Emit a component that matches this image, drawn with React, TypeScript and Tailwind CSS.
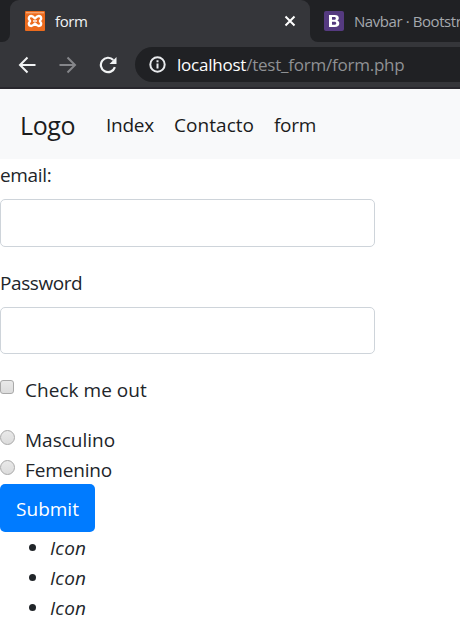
import React from 'react';

function XamppIcon() {
  return (
    <svg className="size-5 shrink-0" viewBox="0 0 20 20">
      <rect width="20" height="20" rx="1" fill="#ec6b1d" />
      <rect x="1" y="1" width="18" height="1.4" fill="#f5a470" />
      <path d="M6.300 5C4.500 5 3.800 6.100 3.800 7.400c0 1.300 1.300 1.800 1.300 2.600s-1.300 1.300-1.300 2.600c0 1.300.7 2.400 2.500 2.400 1.500 0 2.200-.8 3.700-2.500 1.500 1.700 2.200 2.500 3.700 2.500 1.800 0 2.500-1.100 2.500-2.400 0-1.300-1.300-1.800-1.300-2.600s1.300-1.300 1.300-2.600c0-1.300-.7-2.400-2.500-2.400-1.500 0-2.200.8-3.700 2.500C8.500 5.800 7.800 5 6.300 5Z" fill="none" stroke="#fff" strokeWidth="2.300" strokeLinejoin="round" />
      <path d="M8 10h4" stroke="#fff" strokeWidth="1.400" />
    </svg>
  );
}

function BootstrapIcon() {
  return (
    <svg className="size-5 shrink-0" viewBox="0 0 20 20">
      <rect width="20" height="20" rx="2" fill="#553a80" />
      <path fillRule="evenodd" fill="#fff" d="M5 4h5.800c2.600 0 4 1.100 4 3 0 1.300-.7 2.200-1.800 2.600 1.400.3 2.300 1.300 2.300 2.900 0 2.300-1.700 3.500-4.500 3.500H5ZM8 6.100v2.600h2.100c1.200 0 1.700-.5 1.700-1.300s-.6-1.300-1.700-1.300Zm0 4.700v3h2.400c1.300 0 1.900-.6 1.900-1.500s-.7-1.500-1.900-1.500Z" />
    </svg>
  );
}

function Browser() {
  return (
    <header className="h-[89px] overflow-hidden bg-[#35363a]">
      <div className="flex h-[42px] bg-[#35363a]">
        <div className="w-[10px] shrink-0 rounded-br-[8px] bg-[#202124]" />
        <div className="w-[300px] shrink-0 bg-[#202124]">
          <div className="flex h-[42px] items-center rounded-t-[9px] bg-[#35363a] pl-[15px] pr-[14px]">
            <XamppIcon />
            <span className="ml-[10px] text-[15px] leading-5 tracking-[-0.4px] text-[#f1f3f4]">form</span>
            <svg className="ml-auto size-3" viewBox="0 0 12 12">
              <path d="M1.500 1.500l9 9m0-9l-9 9" stroke="#fff" strokeWidth="2" />
            </svg>
          </div>
        </div>
        <div className="flex w-[150px] shrink-0 items-center rounded-bl-[8px] bg-[#202124] pl-[14px]">
          <BootstrapIcon />
          <span className="ml-[10px] whitespace-nowrap text-[15px] leading-5 tracking-[-0.42px] text-[#a5a9ae]">Navbar · Bootstr</span>
        </div>
      </div>
      <div className="flex h-[45px] items-center">
        <svg className="ml-[18px] size-[18px] shrink-0" viewBox="0 0 18 18" fill="none" stroke="#f1f3f4" strokeWidth="2">
          <path d="M17.500 9H2.500M9.500 1.500L2 9l7.500 7.500" />
        </svg>
        <svg className="ml-[23px] size-[18px] shrink-0" viewBox="0 0 18 18" fill="none" stroke="#85868a" strokeWidth="2">
          <path d="M.5 9h15M8.500 1.500L16 9l-7.500 7.500" />
        </svg>
        <svg className="ml-[22px] size-[18px] shrink-0" viewBox="0 0 18 18">
          <path d="M14.300 4A7.200 7.200 0 1 0 15.900 11.200" fill="none" stroke="#f1f3f4" strokeWidth="2.200" />
          <path d="M17.500 1v7h-7Z" fill="#f1f3f4" />
        </svg>
        <div className="ml-[18px] flex h-[35px] grow items-center rounded-l-full bg-[#202124] pl-[14px]">
          <svg className="size-[17px] shrink-0" viewBox="0 0 17 17">
            <circle cx="8.500" cy="8.500" r="7.200" fill="none" stroke="#e8eaed" strokeWidth="2" />
            <path d="M8.500 7.500v5M8.500 4.300v2" stroke="#e8eaed" strokeWidth="2" />
          </svg>
          <span className="ml-[11px] whitespace-nowrap text-[17px] leading-6 tracking-[-0.23px] text-[#8f9194]"><span className="text-white">localhost</span>/test_form/form.php</span>
        </div>
      </div>
      <div className="h-[2px] bg-[#28272d]" />
    </header>
  );
}

function Field({ label, type, size, spacing }: { label: string; type: string; size: string; spacing: string }) {
  return (
    <div className="mb-5">
      <label className={`mb-[10px] block h-[30px] pt-px ${spacing}`}>{label}</label>
      <input type={type} className={`block w-[375px] rounded-[5px] border border-[#ced4da] bg-white px-[15px] outline-none ${size}`} />
    </div>
  );
}

function Radio({ label, spacing }: { label: string; spacing: string }) {
  return (
    <label className="flex h-[30px] pt-px">
      <span className="mt-[5px] size-[15px] shrink-0 rounded-full border border-[#a9a9a9] bg-linear-to-b from-[#e9e9e9] to-[#dcdcdc]" />
      <span className={`ml-[10px] ${spacing}`}>{label}</span>
    </label>
  );
}

export default function App() {
  return (
    <div className="h-[640px] w-[460px] overflow-hidden bg-white font-['Open_Sans','Noto_Sans',sans-serif] text-[19px] leading-[30px] text-[#212529]">
      <Browser />
      <nav className="flex h-[70px] items-center bg-[#f8f9fa] pl-5 pt-[2px] text-[#1b1c1d]">
        <a className="w-[86px] text-[25px] tracking-[-0.4px]">Logo</a>
        <a className="w-[68px] tracking-[-0.25px]">Index</a>
        <a className="w-[100px] tracking-[0.05px]">Contacto</a>
        <a className="tracking-[-0.3px]">form</a>
      </nav>
      <form>
        <Field label="email:" type="email" size="h-[48px]" spacing="tracking-[-0.35px]" />
        <Field label="Password" type="password" size="h-[47px]" spacing="tracking-[-0.42px]" />
        <label className="mb-5 flex h-[30px] pt-px">
          <span className="mt-[5px] size-[14px] shrink-0 rounded-[3px] border border-[#a9a9a9] bg-linear-to-b from-[#e9e9e9] to-[#dcdcdc]" />
          <span className="ml-[11px] tracking-[0.04px]">Check me out</span>
        </label>
        <Radio label="Masculino" spacing="tracking-[0.01px]" />
        <Radio label="Femenino" spacing="tracking-[-0.14px]" />
        <button type="button" className="block h-[48px] w-[95px] rounded-[5px] bg-[#007bff] pt-[2px] tracking-[0px] text-white">Submit</button>
      </form>
      <ul>
        {[0, 1, 2].map((i) => (
          <li key={i} className="flex h-[30px] items-center pl-[29px] pt-px">
            <span className="size-[7px] rounded-full bg-[#212529]" />
            <i className="mt-px ml-[14px] tracking-[0.2px]">Icon</i>
          </li>
        ))}
      </ul>
    </div>
  );
}
